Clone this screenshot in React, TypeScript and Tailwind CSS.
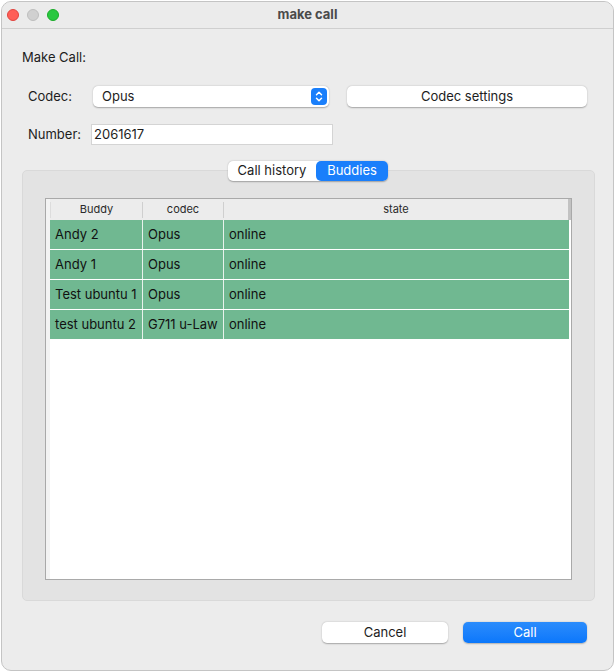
import React from "react";

const rows = [
  ["Andy 2", "Opus", "online"],
  ["Andy 1", "Opus", "online"],
  ["Test ubuntu 1", "Opus", "online"],
  ["test ubuntu 2", "G711 u-Law", "online"],
];

export default function App() {
  return (
    <div className="w-[615px] h-[672px] bg-white" style={{ fontFamily: "Inter, 'Noto Sans', sans-serif" }}>
      <div className="ml-[1px] mt-[1px] w-[613px] h-[670px] rounded-[10px] border border-[#c4c4c4] bg-[#ececec] overflow-hidden flex flex-col">
        {/* title bar */}
        <div className="h-[27px] border-b border-[#cfcfcf] bg-[#ebebeb] flex items-center relative shrink-0">
          <div className="flex items-center gap-[8px] pl-[5px]">
            <span className="w-[12px] h-[12px] rounded-full bg-[#fe5f57] border border-[#e0443e]" />
            <span className="w-[12px] h-[12px] rounded-full bg-[#d0d0d0] border border-[#bdbdbd]" />
            <span className="w-[12px] h-[12px] rounded-full bg-[#29c840] border border-[#1aab29]" />
          </div>
          <div className="absolute inset-0 flex items-center justify-center text-[13px] font-bold text-[#4a4a4a]">make call</div>
        </div>

        {/* Make Call */}
        <div className="mt-[20px] pl-[20px] h-[16px] leading-[16px] text-[13px] text-[#1d1d1d]">Make Call:</div>

        {/* Codec row */}
        <div className="mt-[21px] pl-[26px] flex items-center h-[21px]">
          <div className="w-[65px] text-[13px] text-[#1d1d1d]">Codec:</div>
          <div className="w-[236px] h-[21px] rounded-[5px] bg-white shadow-[0_0.5px_1.5px_rgba(0,0,0,0.3)] flex items-center justify-between pl-[9px] pr-[2px]">
            <span className="text-[13px] text-[#1d1d1d]">Opus</span>
            <span className="w-[16px] h-[17px] rounded-[4px] bg-[#1a7ffb] flex items-center justify-center">
              <svg width="10" height="13" viewBox="0 0 10 13" fill="none">
                <path d="M2.5 4.8 L5 2.3 L7.5 4.8" stroke="white" strokeWidth="1.5" strokeLinecap="round" strokeLinejoin="round" />
                <path d="M2.5 8.2 L5 10.7 L7.5 8.2" stroke="white" strokeWidth="1.5" strokeLinecap="round" strokeLinejoin="round" />
              </svg>
            </span>
          </div>
          <div className="ml-[18px] w-[240px] h-[21px] rounded-[5px] bg-white shadow-[0_0.5px_1.5px_rgba(0,0,0,0.3)] flex items-center justify-center text-[13px] text-[#1d1d1d]">
            Codec settings
          </div>
        </div>

        {/* Number row */}
        <div className="mt-[17px] pl-[26px] flex items-center h-[21px]">
          <div className="w-[63px] text-[13px] text-[#1d1d1d]">Number:</div>
          <div className="w-[242px] h-[21px] bg-white border border-[#d4d4d4] flex items-center pl-[2px] text-[13px] text-[#1d1d1d]">
            2061617
          </div>
        </div>

        {/* Tabs */}
        <div className="mt-[16px] relative z-10 flex justify-center pl-[1px]">
          <div className="flex h-[20px] rounded-[5px] bg-white shadow-[0_0.5px_1.5px_rgba(0,0,0,0.3)] text-[13px]">
            <div className="w-[88px] flex items-center justify-center text-[#1d1d1d]">Call history</div>
            <div className="w-[72px] flex items-center justify-center rounded-[5px] bg-[#1a7ffb] text-white">Buddies</div>
          </div>
        </div>

        {/* Tab box */}
        <div className="-mt-[11px] ml-[20px] w-[573px] h-[431px] rounded-[5px] border border-[#d9d9d9] bg-[#e3e3e3] shrink-0">
          <div className="ml-[22px] mt-[27px] w-[527px] h-[382px] border border-[#a9a9a9] bg-white flex">
            <div className="w-[4px] bg-[#f3f3f3] shrink-0" />
            <div className="flex-1 flex flex-col">
              <div className="h-[21px] bg-[#ececec] flex text-[11px] text-[#2a2a2a] items-center">
                <div className="w-[93px] h-[16px] flex items-center justify-center border-r border-[#cfcfcf] border-l border-l-[#dcdcdc]">Buddy</div>
                <div className="w-[81px] h-[16px] flex items-center justify-center border-r border-[#cfcfcf]">codec</div>
                <div className="flex-1 h-[16px] flex items-center justify-center">state</div>
                <div className="w-[3px] h-[21px] bg-[#c2c2c2]" />
              </div>
              {rows.map((r, i) => (
                <div key={i} className="h-[30px] flex bg-[#70b891] border-b border-white text-[13px] text-[#111] mr-[2px]">
                  <div className="w-[93px] flex items-center pl-[5px] border-r border-[#e8f2ec]">{r[0]}</div>
                  <div className="w-[81px] flex items-center pl-[5px] border-r border-[#e8f2ec]">{r[1]}</div>
                  <div className="flex-1 flex items-center pl-[5px]">{r[2]}</div>
                </div>
              ))}
            </div>
          </div>
        </div>

        {/* buttons */}
        <div className="mt-[21px] flex justify-end pr-[26px] gap-[15px]">
          <div className="w-[126px] h-[21px] rounded-[5px] bg-white shadow-[0_0.5px_1.5px_rgba(0,0,0,0.3)] flex items-center justify-center text-[13px] text-[#1d1d1d]">
            Cancel
          </div>
          <div className="w-[124px] h-[21px] rounded-[5px] bg-gradient-to-b from-[#2a8cfc] to-[#0a77fb] shadow-[0_0.5px_1.5px_rgba(0,0,0,0.25)] flex items-center justify-center text-[13px] text-white">
            Call
          </div>
        </div>
      </div>
    </div>
  );
}
